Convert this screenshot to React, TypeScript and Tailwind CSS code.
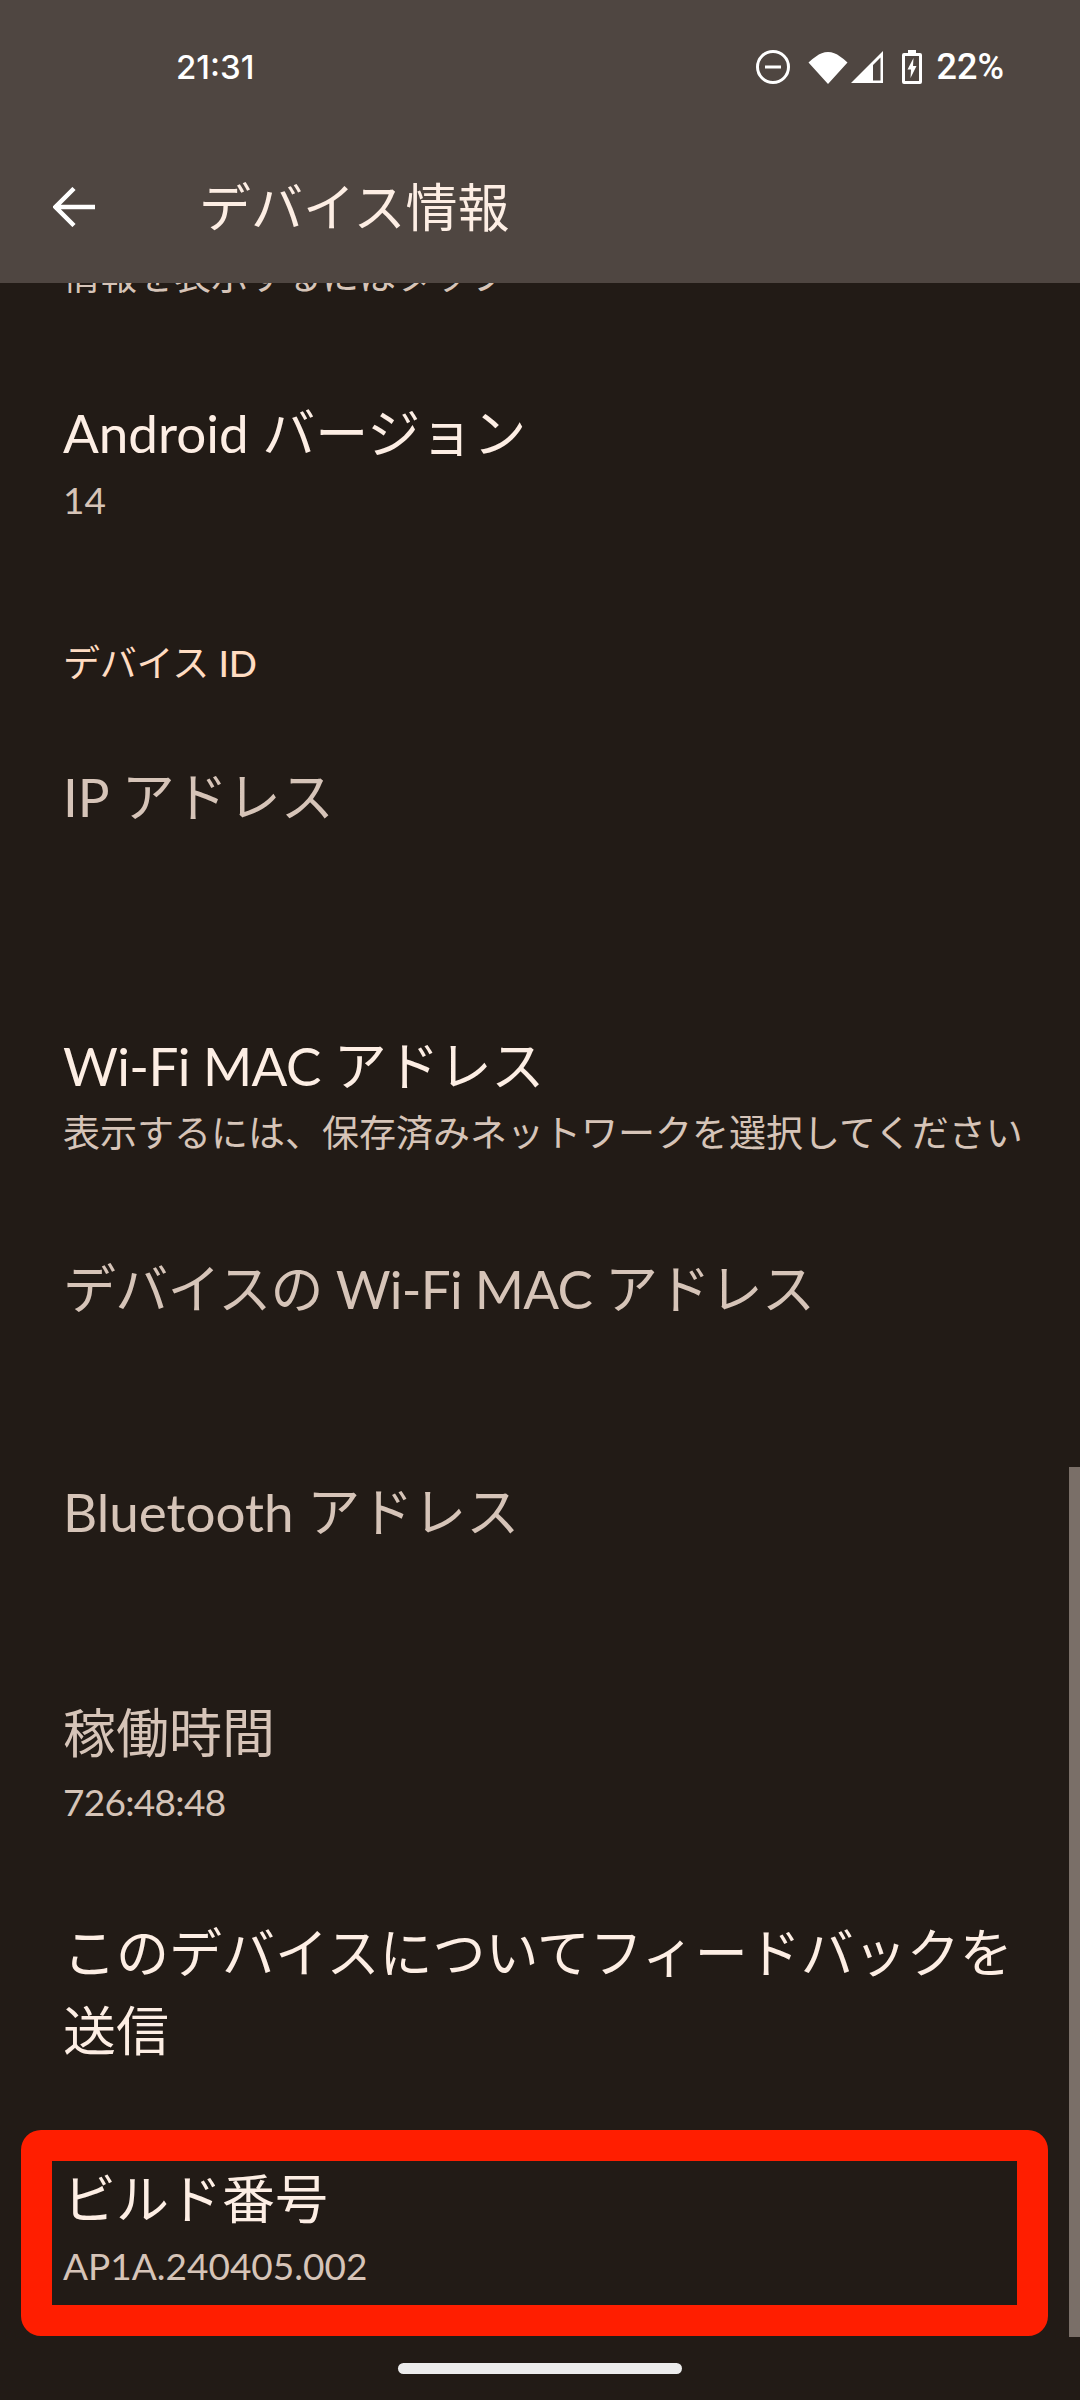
const font = "font-['Lato','Noto_Sans_CJK_JP',sans-serif]";

type Item = {
  title: string;
  summary?: string;
  dim?: boolean;
  pad: string;
  titleTrack?: string;
  summaryTrack?: string;
};

const rows: Item[] = [
  { title: "Android バージョン", summary: "14", pad: "pt-[92px]" },
];

const lower: Item[] = [
  { title: "IP アドレス", dim: true, pad: "pt-[69px]" },
  {
    title: "Wi-Fi MAC アドレス",
    summary: "表示するには、保存済みネットワークを選択してください",
    pad: "pt-[191px]",
    titleTrack: "tracking-[-0.55px]",
  },
  {
    title: "デバイスの Wi-Fi MAC アドレス",
    dim: true,
    pad: "pt-[91px]",
    titleTrack: "tracking-[-0.7px]",
  },
  { title: "Bluetooth アドレス", dim: true, pad: "pt-[145px]" },
  {
    title: "稼働時間",
    summary: "726:48:48",
    dim: true,
    pad: "pt-[143px]",
    summaryTrack: "tracking-[-0.7px] mt-[4px]",
  },
];

function Row({ title, summary, dim, pad, titleTrack = "", summaryTrack = "mt-[2px]" }: Item) {
  return (
    <div className={`px-[63px] ${pad}`}>
      <div
        className={`text-[53px] leading-[78px] whitespace-pre-line ${titleTrack} ${
          dim ? "text-[#d6c4b8]" : "text-[#fdeee4]"
        }`}
      >
        {title}
      </div>
      {summary && (
        <div className={`${summaryTrack} text-[37px] leading-[52px] whitespace-nowrap text-[#d6c4b8]`}>
          {summary}
        </div>
      )}
    </div>
  );
}

function StatusIcons() {
  return (
    <div className="flex items-center">
      <svg width="34" height="34" viewBox="0 0 34 34" className="mr-[18px]">
        <circle cx="17" cy="17" r="15.5" fill="none" stroke="#fff" strokeWidth="3" />
        <rect x="9" y="15.5" width="16" height="3" fill="#fff" />
      </svg>
      <svg width="40" height="33" viewBox="0 0 40 33" className="mr-[3px]">
        <path d="M20 33 L0.5 11.5 Q4 8 8 5.5 Q13.5 1 20 1 Q26.5 1 32 5.5 Q36 8 39.5 11.5 Z" fill="#fff" />
      </svg>
      <svg width="32" height="32" viewBox="0 0 32 32" className="mr-[19px]">
        <path fillRule="evenodd" d="M32 0 V32 H0 Z M29.5 6.5 L22 14 V29.5 H29.5 Z" fill="#fff" />
      </svg>
      <svg width="20" height="34" viewBox="0 0 20 34" className="mr-[15px]">
        <path
          fillRule="evenodd"
          d="M6 0 H14 V3 H18 Q20 3 20 5 V32 Q20 34 18 34 H2 Q0 34 0 32 V5 Q0 3 2 3 H6 Z M3 6 V31 H17 V6 Z"
          fill="#fff"
        />
        <path d="M11.5 8 L5.5 19.5 H9 L8.5 28 L14.5 16 H11 Z" fill="#fff" />
      </svg>
      <span className="font-['Roboto',sans-serif] text-[36px] leading-none font-medium text-white">22%</span>
    </div>
  );
}

export default function App() {
  return (
    <div className={`relative w-[1080px] h-[2400px] overflow-hidden bg-[#221b16] ${font}`}>
      <header className="relative z-10 h-[283px] bg-[#4f4641]">
        <div className="flex h-[134px] items-center justify-between pl-[176px] pr-[76px]">
          <span className="font-['Inter',sans-serif] text-[33px] leading-none font-medium text-white">21:31</span>
          <StatusIcons />
        </div>
        <div className="flex h-[150px] items-center pl-[53px]">
          <svg width="42" height="40" viewBox="0 0 42 40" className="mb-[4px]">
            <path d="M42 20 H4 M21 1.5 L2.5 20 L21 38.5" fill="none" stroke="#fff" strokeWidth="4.5" />
          </svg>
          <h1 className="ml-[104px] mb-[4px] text-[52px] leading-none font-normal text-[#fdeee4]">
            デバイス情報
          </h1>
        </div>
      </header>

      <main>
        <div className="-mt-[33px] px-[63px] text-[37px] leading-[52px] text-[#d6c4b8]">
          情報を表示するにはタップ
        </div>

        {rows.map((r) => (
          <Row key={r.title} {...r} />
        ))}

        <div className="mt-[111px] px-[63px] text-[37px] leading-[52px] tracking-[-0.2px] text-[#ffdcc2]">
          デバイス <span className="font-medium">ID</span>
        </div>

        {lower.map((r) => (
          <Row key={r.title} {...r} />
        ))}

        <Row title={"このデバイスについてフィードバックを\n送信"} pad="pt-[86px]" />
        <Row title="ビルド番号" summary="AP1A.240405.002" pad="pt-[90px]" />
      </main>

      {/* scrollbar */}
      <div className="absolute right-0 top-[1467px] h-[870px] w-[11px] bg-[#7a6f68]" />
      {/* red annotation */}
      <div className="absolute left-[21px] top-[2130px] h-[206px] w-[1027px] rounded-[20px] border-[31px] border-[#ff1e00]" />
      {/* home pill */}
      <div className="absolute left-[398px] top-[2363px] h-[11px] w-[284px] rounded-full bg-[#ececec]" />
    </div>
  );
}
